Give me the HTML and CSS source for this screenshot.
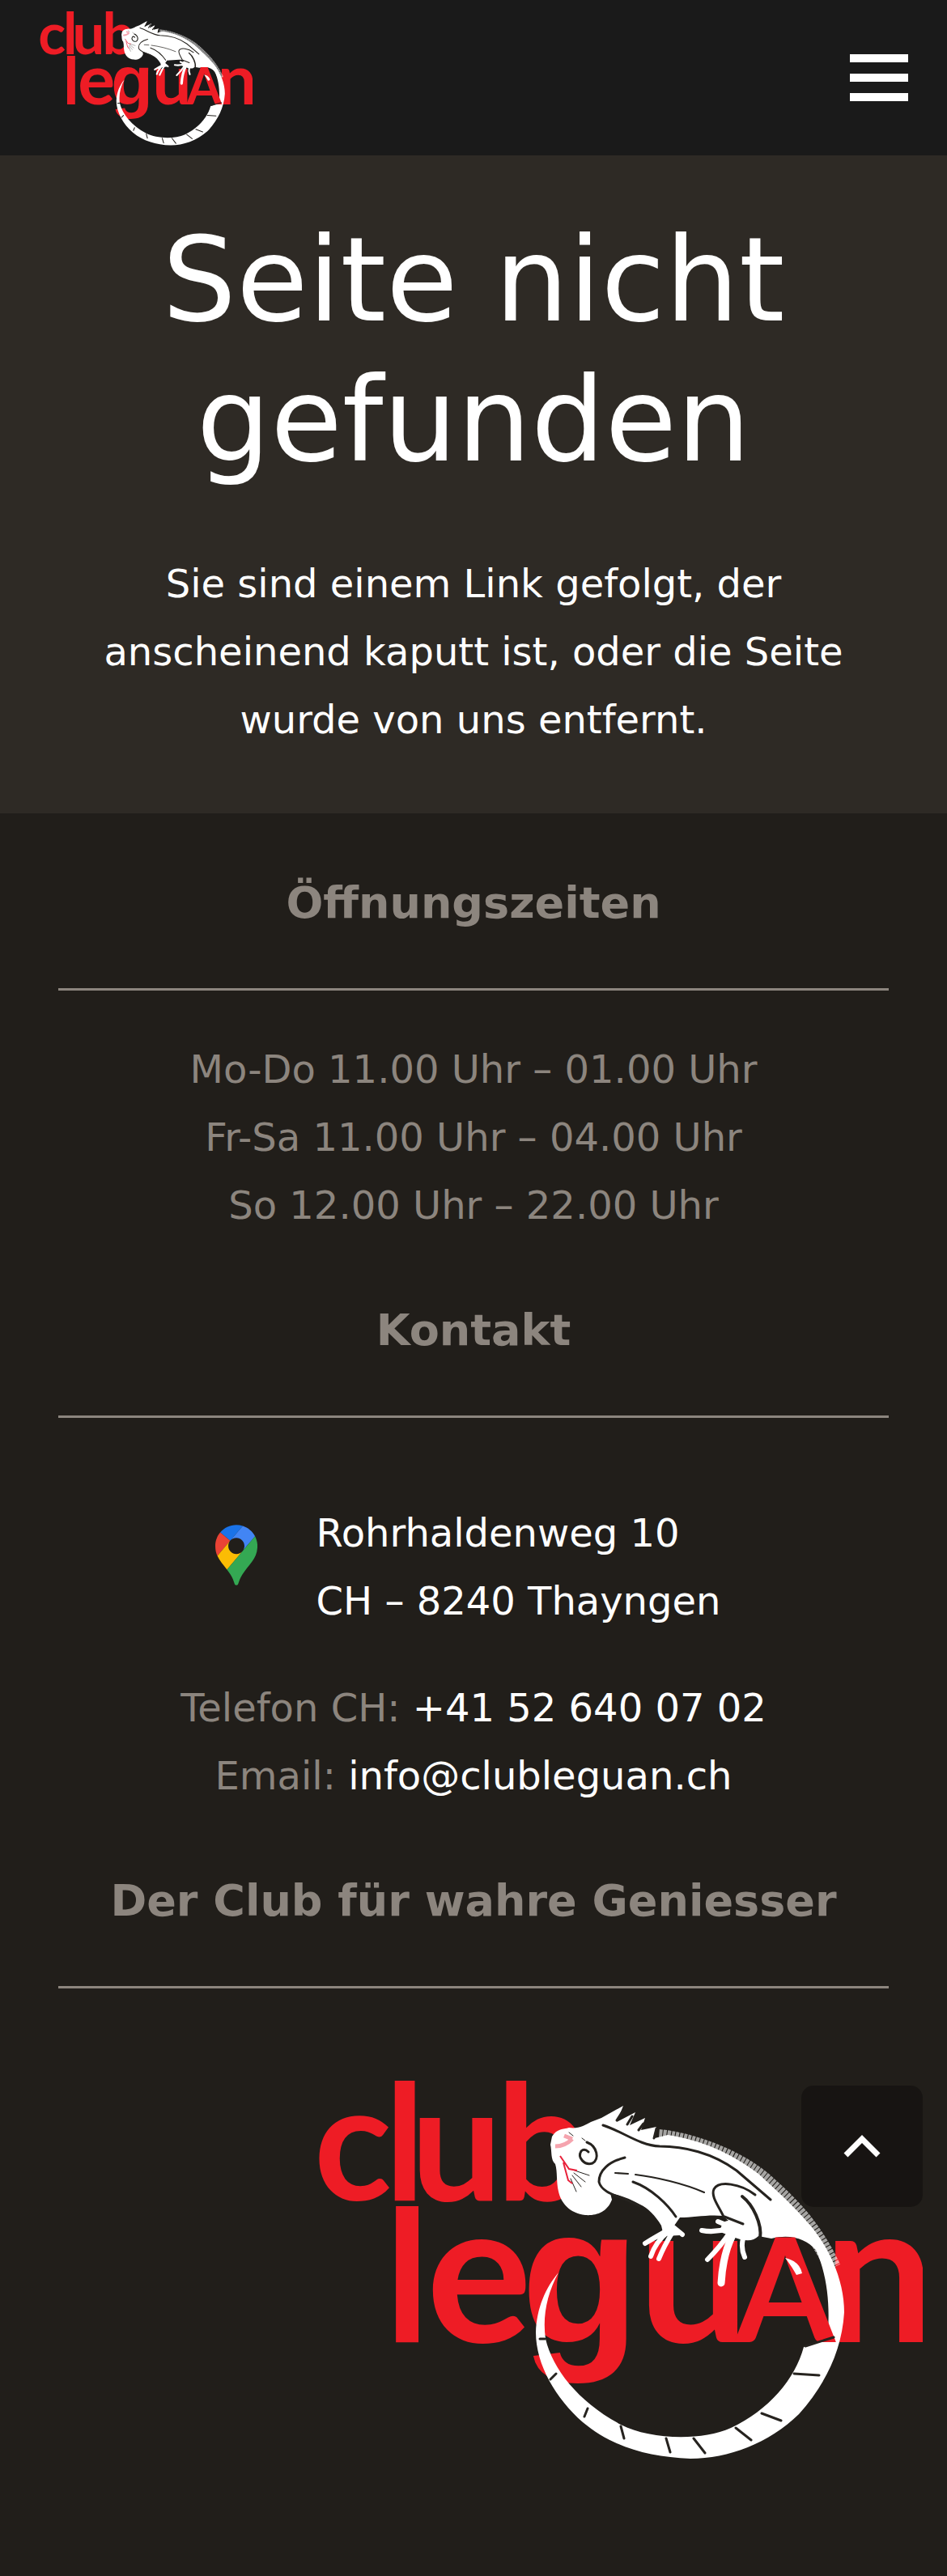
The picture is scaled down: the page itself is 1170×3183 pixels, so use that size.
FILE: index.html
```html
<!DOCTYPE html>
<html lang="de">
<head>
<meta charset="utf-8">
<meta name="viewport" content="width=device-width">
<title>Seite nicht gefunden – Club Leguan</title>
<link rel="stylesheet" href="styles.css">
</head>
<body>
<svg class="sprite" aria-hidden="true">
  <symbol id="logo" viewBox="0 0 750 477">
    <g class="logo-word">
      <text class="logo-top" y="157" x="46 110 174 280">club</text>
      <text class="logo-bottom" y="332" x="113 202 327 467"><tspan class="logo-l">l</tspan>e<tspan class="logo-g">g</tspan>u</text>
      <text class="logo-bottom" y="332" x="696">n</text>
    </g>
    <path fill="none" stroke="#fff" stroke-opacity=".6" stroke-width="20" stroke-dasharray="4 1" d="M424 79C460 82 520 102 556 134S616 192 639 240"/>
    <path fill="#fff" d="M292 78C298 68 306 69 313 67C324 69 333 64 340 60L353 55L380 40L372 60L395 48L388 64L407 55L402 70L421 66L419 80L435 76C475 82 513 98 547 124C580 154 596 170 613 190C640 224 653 262 653 295C650 345 628 386 597 421C560 457 510 476 463 476C410 474 366 461 330 431C297 402 272 360 272 320C273 290 284 265 300 246C286 272 280 300 284 328C293 366 325 406 377 434C412 452 475 455 513 438C560 416 592 378 603 338L632 328C636 292 633 251 618 218C606 205 588 198 563 204L547 201C540 208 530 208 513 201L500 196C500 188 504 182 510 182L503 176C486 174 466 178 450 178L443 188L450 200L430 201L427 188C420 176 410 166 401 162C390 156 376 150 364 148L366 156C360 172 346 176 333 175C314 173 303 160 300 146C297 133 299 122 296 112C290 107 292 96 290 88Z"/>
    <g class="logo-word"><text class="logo-a" y="332" x="580">A</text></g>
    <g fill="none" stroke="#fff" stroke-linecap="round" stroke-linejoin="round">
      <g stroke-width="6">
        <path d="M440 191Q420 202 407 210M436 195Q420 208 414 226M441 196Q430 214 424 229M442 190L453 199"/>
        <path d="M509 192Q492 197 477 194M512 196Q500 214 484 230M497 183L509 188M528 204Q525 216 530 227"/>
      </g>
      <path stroke-width="9" d="M515 200Q503 224 501 259"/>
    </g>
    <path fill="#fff" d="M580 228Q598 232 601 247L594 249Q588 238 580 228Z"/>
    <g fill="none" stroke="#26231f" stroke-width="3" stroke-linecap="round">
      <path d="M355 64C380 72 400 89 425 90C455 90 490 98 520 120L562 156"/>
      <path d="M382 104C362 109 350 120 350 134C354 150 380 152 400 164M392 134C415 142 435 162 445 177"/>
      <path stroke-width="2" d="M395 125C420 128 455 136 480 147M370 123L386 124"/>
      <path d="M504 177C498 164 488 152 492 143C498 132 525 136 543 150M505 177L528 186"/>
      <path stroke-width="4" d="M527 152C540 162 552 186 549 204"/>
      <path d="M335 85C348 90 351 106 342 111C332 114 323 104 328 96Q332 92 337 97"/>
      <path stroke-width="1" d="M320 120L338 126M319 123L333 134M317 126L328 140M315 130L322 146M313 73l5 4M329 80l4 3"/>
      <path d="M372 58L379 47M385 63L391 53M399 70L405 62M418 80L421 68"/>
      <path d="M605 337L640 326M591 371L622 373M551 420L575 429M519 438L538 453M467 451L481 469M433 451L438 468M377 436L381 451M336 414L332 424M297 371L290 378M277 328L283 328"/>
    </g>
    <path fill="none" stroke="#e8213a" stroke-width="2" d="M302 102L313 118L323 120M306 110L312 132L317 136"/>
    <path fill="none" stroke="#f5a4ae" stroke-width="5" d="M296 90Q308 90 317 81M307 77L317 81"/>
  </symbol>
</svg>

<header class="site-header">
  <a class="brand" href="#" aria-label="Club Leguan"><svg class="logo" viewBox="0 0 750 477"><use href="#logo"/></svg></a>
  <button class="menu-button" type="button" aria-label="Menü"><span></span><span></span><span></span></button>
</header>

<main class="hero">
  <h1>Seite nicht gefunden</h1>
  <p>Sie sind einem Link gefolgt, der anscheinend kaputt ist, oder die Seite wurde von uns entfernt.</p>
</main>

<footer class="site-footer">
  <section class="block">
    <h2>Öffnungszeiten</h2>
    <p>Mo-Do 11.00 Uhr – 01.00 Uhr<br>Fr-Sa 11.00 Uhr – 04.00 Uhr<br>So 12.00 Uhr – 22.00 Uhr</p>
  </section>
  <section class="block">
    <h2>Kontakt</h2>
    <div class="address">
      <svg class="pin" viewBox="0 0 92.3 132.3" aria-hidden="true">
        <path fill="#1a73e8" d="M60.2 2.2C55.8.8 51 0 46.1 0 32 0 19.3 6.4 10.8 16.5l21.8 18.3L60.2 2.2z"/>
        <path fill="#ea4335" d="M10.8 16.5C4.1 24.5 0 34.9 0 46.1c0 8.7 1.7 15.7 4.6 22l28-33.3-21.8-18.3z"/>
        <path fill="#4285f4" d="M46.2 28.5c9.8 0 17.7 7.9 17.7 17.7 0 4.3-1.6 8.3-4.2 11.4 0 0 13.9-16.6 27.5-32.7-5.6-10.8-15.3-19-27-22.7L32.6 34.8c3.3-3.8 8.1-6.3 13.6-6.3"/>
        <path fill="#fbbc04" d="M46.2 63.8c-9.8 0-17.7-7.9-17.7-17.7 0-4.3 1.5-8.3 4.1-11.3l-28 33.3c4.8 10.6 12.8 19.2 21 29.9l34.1-40.5c-3.3 3.9-8.1 6.3-13.5 6.3"/>
        <path fill="#34a853" d="M59.1 109.2c15.4-24.1 33.3-35 33.3-63 0-7.7-1.9-14.9-5.2-21.3L25.6 98c2.6 3.4 5.3 7.3 7.9 11.3 9.4 14.5 6.8 23.1 12.8 23.1s3.4-8.7 12.8-23.2"/>
      </svg>
      <a href="#">Rohrhaldenweg 10<br>CH – 8240 Thayngen</a>
    </div>
    <p>Telefon CH: <a href="tel:+41526400702">+41 52 640 07 02</a><br>Email: <a href="mailto:info@clubleguan.ch">info@clubleguan.ch</a></p>
  </section>
  <section class="block">
    <h2>Der Club für wahre Geniesser</h2>
  </section>
  <div class="footer-logo">
    <svg class="logo" viewBox="0 0 750 477" role="img" aria-label="Club Leguan"><use href="#logo"/></svg>
    <button class="to-top" type="button" aria-label="Nach oben">
      <svg viewBox="0 0 46 28" aria-hidden="true"><path fill="none" stroke="#fff" stroke-width="7" stroke-linejoin="miter" d="M3 25L23 5L43 25"/></svg>
    </button>
  </div>
</footer>
</body>
</html>
```
FILE: styles.css
```css
* {
  box-sizing: border-box;
}

body {
  margin: 0;
  background: #211e1a;
  color: #fff;
  font: 48px/84px "DejaVu Sans", sans-serif;
}

h1,
h2,
p {
  margin: 0;
}

a {
  color: #fff;
  text-decoration: none;
}

button {
  border: 0;
  padding: 0;
  cursor: pointer;
}

.sprite {
  position: absolute;
  width: 0;
  height: 0;
}

.logo {
  display: block;
  width: 100%;
  overflow: visible;
}

.logo-word {
  fill: #ee1c25;
  font-family: Lato, sans-serif;
  font-weight: 700;
  text-anchor: middle;
}

.logo-top {
  font-size: 200px;
}

.logo-bottom {
  font-size: 244px;
}

.logo-l {
  font-size: 226px;
}

.logo-g {
  font-family: "Liberation Sans", sans-serif;
  font-size: 240px;
}

.logo-a {
  font-size: 178px;
}

.site-header {
  display: flex;
  align-items: center;
  justify-content: space-between;
  height: 192px;
  padding: 0 48px;
  background: #1a1a1a;
}

.brand {
  width: 264px;
}

.menu-button {
  display: flex;
  flex-direction: column;
  gap: 14px;
  width: 72px;
  background: none;
}

.menu-button span {
  height: 10px;
  background: #fff;
}

.hero {
  padding: 68px 72px 74px;
  background: #2e2a25;
  text-align: center;
}

.hero h1 {
  margin-bottom: 73px;
  font-size: 144px;
  font-weight: 400;
  line-height: 173px;
}

.site-footer {
  padding: 78px 0 144px;
  color: #8c857e;
  text-align: center;
}

.block {
  margin: 0 72px 80px;
}

.block h2 {
  margin-bottom: 55px;
  padding-bottom: 73px;
  border-bottom: 3px solid #8c857e;
  font-size: 54px;
  line-height: 65px;
}

.address {
  display: flex;
  justify-content: center;
  gap: 73px;
  margin: 100px 0 48px;
  padding-right: 14px;
  text-align: left;
}

.pin {
  width: 52px;
  height: 75px;
  margin-top: 32px;
}

.footer-logo {
  position: relative;
  margin: 105px 30px 0 33.333%;
}

.to-top {
  position: absolute;
  top: 15px;
  right: 0;
  display: grid;
  place-items: center;
  width: 150px;
  height: 150px;
  border-radius: 15px;
  background: rgba(0, 0, 0, 0.3);
}

.to-top svg {
  width: 46px;
}
```
